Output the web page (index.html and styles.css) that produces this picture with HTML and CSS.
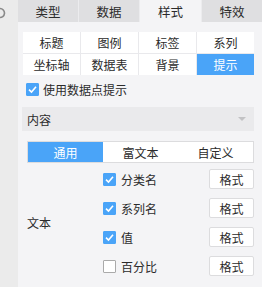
FILE: index.html
```html
<!DOCTYPE html>
<html lang="zh">

<head>
    <meta charset="UTF-8">
    <meta name="viewport" content="width=device-width, initial-scale=1.0">
    <title>图表属性</title>
    <link rel="stylesheet" href="styles.css">
</head>

<body>
    <div class="app">
        <div class="rail">
            <svg class="rail-icon" width="12" height="12" viewBox="0 0 12 12">
                <path d="M6 1.5 A4.5 4.5 0 1 1 1.6 5" fill="none" stroke="#8a8a8a" stroke-width="1.6" />
            </svg>
        </div>

        <div class="panel">
            <div class="tabs">
                <div class="tab">类型</div>
                <div class="tab">数据</div>
                <div class="tab active">样式</div>
                <div class="tab">特效</div>
            </div>

            <div class="content">
                <div class="subgrid">
                    <div class="cell">标题</div>
                    <div class="cell">图例</div>
                    <div class="cell">标签</div>
                    <div class="cell">系列</div>
                    <div class="cell">坐标轴</div>
                    <div class="cell">数据表</div>
                    <div class="cell">背景</div>
                    <div class="cell active">提示</div>
                </div>

                <label class="check-row">
                    <span class="box checked">
                        <svg width="11" height="11" viewBox="0 0 11 11"><path d="M2 5.6 L4.5 8 L9 2.8" fill="none" stroke="#fff" stroke-width="1.6" /></svg>
                    </span>
                    使用数据点提示
                </label>

                <div class="select">
                    <span>内容</span>
                    <span class="caret"></span>
                </div>

                <div class="segments">
                    <div class="seg active">通用</div>
                    <div class="seg">富文本</div>
                    <div class="seg">自定义</div>
                </div>

                <div class="field">
                    <div class="field-label">文本</div>
                    <div class="items">
                        <div class="item">
                            <span class="box checked">
                                <svg width="11" height="11" viewBox="0 0 11 11"><path d="M2 5.6 L4.5 8 L9 2.8" fill="none" stroke="#fff" stroke-width="1.6" /></svg>
                            </span>
                            <span class="item-name">分类名</span>
                            <button class="fmt-btn">格式</button>
                        </div>
                        <div class="item">
                            <span class="box checked">
                                <svg width="11" height="11" viewBox="0 0 11 11"><path d="M2 5.6 L4.5 8 L9 2.8" fill="none" stroke="#fff" stroke-width="1.6" /></svg>
                            </span>
                            <span class="item-name">系列名</span>
                            <button class="fmt-btn">格式</button>
                        </div>
                        <div class="item">
                            <span class="box checked">
                                <svg width="11" height="11" viewBox="0 0 11 11"><path d="M2 5.6 L4.5 8 L9 2.8" fill="none" stroke="#fff" stroke-width="1.6" /></svg>
                            </span>
                            <span class="item-name">值</span>
                            <button class="fmt-btn">格式</button>
                        </div>
                        <div class="item">
                            <span class="box"></span>
                            <span class="item-name">百分比</span>
                            <button class="fmt-btn">格式</button>
                        </div>
                    </div>
                </div>
            </div>
        </div>
    </div>
</body>

</html>
```

FILE: styles.css
```css
* {
    box-sizing: border-box;
}

body {
    margin: 0;
    font-family: "Noto Sans CJK SC", "Noto Sans", sans-serif;
    font-size: 12px;
    color: #2b2b2b;
    background-color: #f4f4f6;
}

.app {
    display: flex;
    width: 262px;
    height: 287px;
    overflow: hidden;
}

.rail {
    width: 18px;
    flex-shrink: 0;
    background-color: #ebebeb;
    overflow: hidden;
    padding-top: 7px;
}

.rail-icon {
    display: block;
    margin-left: -6px;
}

.panel {
    flex: 1;
    background-color: #f4f4f6;
}

/* top tabs */
.tabs {
    display: grid;
    grid-template-columns: 61px 61px 62px 60px;
    height: 22px;
}

.tab {
    display: flex;
    align-items: center;
    justify-content: center;
    background-color: #dfdfe1;
    border-right: 1px solid #ececee;
    font-size: 12.5px;
}

.tab:last-child {
    border-right: none;
}

.tab.active {
    background-color: #f4f4f6;
}

.content {
    padding: 10px 8px 0 5px;
}

/* sub tabs */
.subgrid {
    display: grid;
    grid-template-columns: repeat(4, 1fr);
    grid-auto-rows: 21px;
    gap: 1px;
    background-color: #e9e9ec;
}

.cell {
    display: flex;
    align-items: center;
    justify-content: center;
    background-color: #fff;
}

.cell.active {
    background-color: #4aa4f8;
    color: #fff;
}

.check-row {
    display: flex;
    align-items: center;
    gap: 4px;
    height: 20px;
    margin-top: 4px;
    padding-left: 3px;
}

.box {
    width: 13px;
    height: 13px;
    border: 1px solid #aaa;
    border-radius: 1px;
    background-color: #fff;
    display: inline-flex;
    align-items: center;
    justify-content: center;
    flex-shrink: 0;
}

.box.checked {
    background-color: #4aa4f8;
    border-color: #4aa4f8;
}

.select {
    display: flex;
    align-items: center;
    justify-content: space-between;
    height: 24px;
    margin-top: 8px;
    margin-left: -1px;
    padding: 0 8px 0 5px;
    background-color: #eaeaec;
}

.caret {
    width: 0;
    height: 0;
    border-left: 4px solid transparent;
    border-right: 4px solid transparent;
    border-top: 4px solid #c2c2c4;
}

/* segmented control */
.segments {
    display: grid;
    grid-template-columns: 75px 75px 1fr;
    height: 22px;
    margin: 10px 0 0 4px;
    border: 1px solid #dcdcde;
}

.seg {
    display: flex;
    align-items: center;
    justify-content: center;
    background-color: #fff;
}

.seg.active {
    background-color: #4aa4f8;
    color: #fff;
}

.field {
    display: flex;
    align-items: center;
    margin: 6px 0 0 4px;
}

.field-label {
    width: 76px;
    flex-shrink: 0;
}

.items {
    flex: 1;
    display: flex;
    flex-direction: column;
    gap: 9px;
}

.item {
    display: flex;
    align-items: center;
    height: 20px;
}

.item-name {
    flex: 1;
    margin-left: 5px;
}

.fmt-btn {
    width: 45px;
    height: 20px;
    padding: 0;
    font-family: inherit;
    font-size: 12px;
    color: #2b2b2b;
    background-color: #fff;
    border: 1px solid #dcdcde;
    border-radius: 2px;
}
```
